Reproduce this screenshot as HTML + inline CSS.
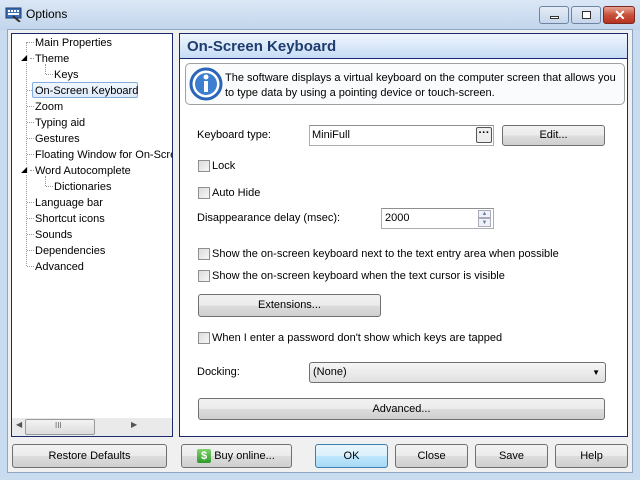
<!DOCTYPE html><html><head><style>
*{margin:0;padding:0;box-sizing:border-box}
body{width:640px;height:480px;overflow:hidden;background:#c9dbef;font-family:"Liberation Sans",sans-serif;font-size:11px;color:#000;position:relative}
.a{position:absolute}
.tb{left:0;top:0;width:640px;height:30px;background:linear-gradient(#dbe7f5,#c2d5ec)}
.client{left:7px;top:29px;width:626px;height:444px;background:#f0f0f0;border:1px solid #8ea7c4}
.panel{background:#fff;border:1px solid #1b2a6e}
.btn{position:absolute;border:1px solid #707070;border-radius:3px;background:linear-gradient(#f2f2f2 0,#ebebeb 50%,#dddddd 51%,#cfcfcf 100%);text-align:center;font-size:11px}
.t{position:absolute;white-space:nowrap}
.cb{position:absolute;width:12px;height:12px;border:1px solid #8e8f8f;background:linear-gradient(135deg,#dcdcdc,#f6f6f6)}
.inp{position:absolute;border:1px solid #abadb3;background:#fff;border-top-color:#8e8f8f}
.dot{position:absolute;border-left:1px dotted #999}
.doth{position:absolute;border-top:1px dotted #999;height:0}
.wb{position:absolute;top:6px;height:18px;border:1px solid #6d84a3;border-radius:3px;background:linear-gradient(#e4ecf6,#c7d6ea)}
</style></head><body>
<div class="a tb"></div>
<svg class="a" style="left:5px;top:6px" width="18" height="16"><rect x="1" y="2" width="15" height="10" fill="#3a6fb8" stroke="#1e3d70"/><g fill="#fff"><rect x="3" y="4" width="2" height="2"/><rect x="6" y="4" width="2" height="2"/><rect x="9" y="4" width="2" height="2"/><rect x="12" y="4" width="2" height="2"/><rect x="3" y="7" width="11" height="2"/></g><path d="M8 10 L15 16" stroke="#333" stroke-width="2"/></svg>
<div class="t" style="left:26px;top:7px;font-size:12px">Options</div>
<div class="wb" style="left:539px;width:30px"><div class="a" style="left:10px;top:9px;width:9px;height:3px;border:1px solid #333;background:#fff"></div></div>
<div class="wb" style="left:571px;width:30px"><div class="a" style="left:10px;top:4px;width:9px;height:8px;border:1px solid #333;background:#fff"></div></div>
<div class="wb" style="left:603px;width:32px;border-color:#7a2a1e;background:linear-gradient(#e8a493,#c8503a 50%,#b8321f)"><div class="t" style="left:10px;top:0px;color:#fff;font-weight:bold;font-size:14px">✕</div></div>
<div class="a client"></div>
<div class="a panel" style="left:11px;top:33px;width:162px;height:404px"></div>
<!-- tree lines -->
<div class="dot" style="left:26px;top:42px;height:224px"></div>
<div class="dot" style="left:45px;top:64px;height:10px"></div>
<div class="dot" style="left:45px;top:176px;height:10px"></div>
<div class="doth" style="left:27px;top:42px;width:7px"></div>
<div class="doth" style="left:30px;top:58px;width:4px"></div>
<div class="doth" style="left:46px;top:74px;width:7px"></div>
<div class="doth" style="left:27px;top:90px;width:5px"></div>
<div class="doth" style="left:27px;top:106px;width:7px"></div>
<div class="doth" style="left:27px;top:122px;width:7px"></div>
<div class="doth" style="left:27px;top:138px;width:7px"></div>
<div class="doth" style="left:27px;top:154px;width:7px"></div>
<div class="doth" style="left:30px;top:170px;width:4px"></div>
<div class="doth" style="left:46px;top:186px;width:7px"></div>
<div class="doth" style="left:27px;top:202px;width:7px"></div>
<div class="doth" style="left:27px;top:218px;width:7px"></div>
<div class="doth" style="left:27px;top:234px;width:7px"></div>
<div class="doth" style="left:27px;top:250px;width:7px"></div>
<div class="doth" style="left:27px;top:266px;width:7px"></div>
<div class="t" style="left:21px;top:53px;font-size:8px;background:#fff">◢</div>
<div class="t" style="left:21px;top:165px;font-size:8px;background:#fff">◢</div>
<div class="a" style="left:32px;top:82px;width:106px;height:16px;border:1px solid #84acdd;border-radius:2px;background:linear-gradient(#f2f7fd,#dcebfc)"></div>
<div style="position:absolute;left:35px;top:35px;line-height:16px;width:137px;overflow:hidden;white-space:nowrap">Main Properties<br>Theme<br><span style="padding-left:19px">Keys</span><br>On-Screen Keyboard<br>Zoom<br>Typing aid<br>Gestures<br>Floating Window for On-Screen<br>Word Autocomplete<br><span style="padding-left:19px">Dictionaries</span><br>Language bar<br>Shortcut icons<br>Sounds<br>Dependencies<br>Advanced</div>
<!-- hscroll -->
<div class="a" style="left:12px;top:418px;width:160px;height:18px;background:#eaeaea"></div>
<div class="t" style="left:16px;top:420px;font-size:8px;color:#555">◀</div>
<div class="a" style="left:25px;top:419px;width:70px;height:16px;border:1px solid #999;border-radius:2px;background:linear-gradient(#f3f3f3,#dcdcdc)"></div>
<div class="t" style="left:55px;top:421px;font-size:8px;color:#666">III</div>
<div class="t" style="left:131px;top:420px;font-size:8px;color:#555">▶</div>
<!-- right panel -->
<div class="a panel" style="left:179px;top:33px;width:449px;height:404px"></div>
<div class="a" style="left:180px;top:34px;width:447px;height:25px;background:linear-gradient(#f0f6fd,#c6dcf5);border-bottom:1px solid #1b2a6e"></div>
<div class="t" style="left:187px;top:38px;font-size:15px;font-weight:bold;color:#1e3c6e">On-Screen Keyboard</div>
<div class="a" style="left:185px;top:63px;width:440px;height:42px;border:1px solid #a0a0a0;border-radius:5px;background:#fafbfc"></div>
<svg class="a" style="left:189px;top:67px" width="34" height="34"><circle cx="17" cy="17" r="15" fill="#fff" stroke="#2b64b8" stroke-width="3"/><circle cx="17" cy="17" r="11" fill="#3d7ed0"/><circle cx="17" cy="10" r="2.5" fill="#fff"/><rect x="15" y="14" width="4" height="11" fill="#fff"/></svg>
<div class="t" style="left:225px;top:71px;line-height:15px">The software displays a virtual keyboard on the computer screen that allows you<br>to type data by using a pointing device or touch-screen.</div>
<div class="t" style="left:197px;top:129px">Keyboard type:</div>
<div class="inp" style="left:309px;top:125px;width:185px;height:21px"></div>
<div class="t" style="left:312px;top:129px">MiniFull</div>
<div class="a" style="left:476px;top:127px;width:16px;height:16px;border:1px solid #555;border-radius:2px;background:#eee;text-align:center;line-height:10px;font-weight:bold">···</div>
<div class="btn" style="left:502px;top:125px;width:103px;height:21px;line-height:19px">Edit...</div>
<div class="cb" style="left:198px;top:160px"></div><div class="t" style="left:212px;top:160px">Lock</div>
<div class="cb" style="left:198px;top:187px"></div><div class="t" style="left:212px;top:187px">Auto Hide</div>
<div class="t" style="left:197px;top:212px">Disappearance delay (msec):</div>
<div class="inp" style="left:381px;top:208px;width:113px;height:21px"></div>
<div class="t" style="left:385px;top:212px">2000</div>
<div class="a" style="left:478px;top:210px;width:13px;height:8px;border:1px solid #aab;background:#eef2f8;font-size:6px;text-align:center;color:#6a80a8;line-height:7px">▲</div>
<div class="a" style="left:478px;top:218px;width:13px;height:9px;border:1px solid #aab;background:#eef2f8;font-size:6px;text-align:center;color:#6a80a8;line-height:8px">▼</div>
<div class="cb" style="left:198px;top:248px"></div><div class="t" style="left:212px;top:248px">Show the on-screen keyboard next to the text entry area when possible</div>
<div class="cb" style="left:198px;top:270px"></div><div class="t" style="left:212px;top:270px">Show the on-screen keyboard when the text cursor is visible</div>
<div class="btn" style="left:198px;top:294px;width:183px;height:23px;line-height:21px">Extensions...</div>
<div class="cb" style="left:198px;top:332px"></div><div class="t" style="left:212px;top:332px">When I enter a password don't show which keys are tapped</div>
<div class="t" style="left:197px;top:366px">Docking:</div>
<div class="btn" style="left:309px;top:362px;width:297px;height:21px;line-height:19px;text-align:left;padding-left:3px;background:linear-gradient(#f6f6f6,#e0e0e0)">(None)<span style="position:absolute;right:5px;top:0;font-size:8px">▼</span></div>
<div class="btn" style="left:198px;top:398px;width:407px;height:22px;line-height:20px">Advanced...</div>
<!-- bottom buttons -->
<div class="btn" style="left:12px;top:444px;width:155px;height:24px;line-height:22px">Restore Defaults</div>
<div class="btn" style="left:181px;top:444px;width:111px;height:24px;line-height:22px;padding-left:16px">Buy online...</div>
<div class="a" style="left:197px;top:449px;width:14px;height:14px;border-radius:2px;background:linear-gradient(#7fd36a,#2e9a2a);color:#fff;font-weight:bold;font-size:11px;text-align:center;line-height:14px">$</div>
<div class="btn" style="left:315px;top:444px;width:73px;height:24px;line-height:22px;border-color:#3c7fb1;background:linear-gradient(#eaf6fd,#d9f0fc 50%,#bee6fd 51%,#a7d9f5)">OK</div>
<div class="btn" style="left:395px;top:444px;width:73px;height:24px;line-height:22px">Close</div>
<div class="btn" style="left:475px;top:444px;width:73px;height:24px;line-height:22px">Save</div>
<div class="btn" style="left:555px;top:444px;width:73px;height:24px;line-height:22px">Help</div>
</body></html>
